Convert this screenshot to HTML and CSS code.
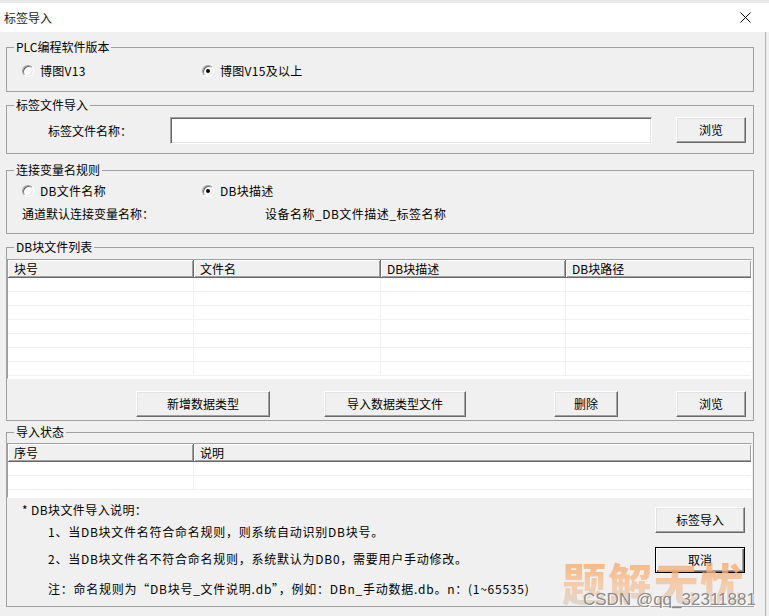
FILE: index.html
```html
<!DOCTYPE html>
<html lang="zh-CN">
<head>
    <meta charset="UTF-8">
    <title>标签导入</title>
    <link rel="stylesheet" href="styles.css">
</head>
<body>
    <div class="window">
        <div class="titlebar">
            <span class="title">标签导入</span>
            <svg class="close" width="11" height="11" viewBox="0 0 11 11">
                <path d="M0.5 0.5 L10.5 10.5 M10.5 0.5 L0.5 10.5" stroke="#000" stroke-width="1" fill="none"/>
            </svg>
        </div>

        <div class="dialog">
            <fieldset class="group version">
                <legend>PLC编程软件版本</legend>
                <div class="radio-row">
                    <label class="radio"><span class="radio-box"></span>博图V13</label>
                    <label class="radio"><span class="radio-box checked"></span>博图V15及以上</label>
                </div>
            </fieldset>

            <fieldset class="group file">
                <legend>标签文件导入</legend>
                <div class="file-row">
                    <span class="field-label">标签文件名称：</span>
                    <input type="text" class="textbox">
                    <button class="btn btn-browse">浏览</button>
                </div>
            </fieldset>

            <fieldset class="group naming">
                <legend>连接变量名规则</legend>
                <div class="radio-row">
                    <label class="radio"><span class="radio-box"></span>DB文件名称</label>
                    <label class="radio"><span class="radio-box checked"></span>DB块描述</label>
                </div>
                <div class="info-row">
                    <span class="info-label">通道默认连接变量名称：</span>
                    <span class="info-value">设备名称_DB文件描述_标签名称</span>
                </div>
            </fieldset>

            <fieldset class="group db-list">
                <legend>DB块文件列表</legend>
                <div class="listview list-db">
                    <table class="grid">
                        <thead>
                            <tr>
                                <th class="col-a">块号</th>
                                <th class="col-b">文件名</th>
                                <th class="col-c">DB块描述</th>
                                <th class="col-d">DB块路径</th>
                            </tr>
                        </thead>
                        <tbody>
                            <tr><td></td><td></td><td></td><td></td></tr>
                            <tr><td></td><td></td><td></td><td></td></tr>
                            <tr><td></td><td></td><td></td><td></td></tr>
                            <tr><td></td><td></td><td></td><td></td></tr>
                            <tr><td></td><td></td><td></td><td></td></tr>
                            <tr><td></td><td></td><td></td><td></td></tr>
                            <tr><td></td><td></td><td></td><td></td></tr>
                        </tbody>
                    </table>
                </div>
                <div class="btn-row">
                    <button class="btn btn-add">新增数据类型</button>
                    <button class="btn btn-import-type">导入数据类型文件</button>
                    <button class="btn btn-delete">删除</button>
                    <button class="btn btn-browse">浏览</button>
                </div>
            </fieldset>

            <fieldset class="group status">
                <legend>导入状态</legend>
                <div class="listview list-status">
                    <table class="grid">
                        <thead>
                            <tr>
                                <th class="col-a">序号</th>
                                <th class="col-wide">说明</th>
                            </tr>
                        </thead>
                        <tbody>
                            <tr><td></td><td></td></tr>
                            <tr><td></td><td></td></tr>
                        </tbody>
                    </table>
                </div>
                <div class="notes-area">
                    <div class="notes">
                        <p class="note-head">* DB块文件导入说明：</p>
                        <p class="note n1">1、当DB块文件名符合命名规则，则系统自动识别DB块号。</p>
                        <p class="note n2">2、当DB块文件名不符合命名规则，系统默认为DB0，需要用户手动修改。</p>
                        <p class="note n3">注：命名规则为“DB块号_文件说明.db”，例如：DBn_手动数据.db。n：(1~65535)</p>
                    </div>
                    <div class="side-buttons">
                        <button class="btn btn-side">标签导入</button>
                        <button class="btn btn-side default">取消</button>
                    </div>
                </div>
            </fieldset>
        </div>

        <div class="watermark">
            <span class="wm-big">题解无忧</span>
            <span class="wm-small">CSDN @qq_32311881</span>
        </div>
    </div>
</body>
</html>
```

FILE: styles.css
```css
:root {
    --face: #f0f0f0;
    --frame: #a0a0a0;
    --shadow: #696969;
    --light: #e3e3e3;
    --grid: #f0f0f0;
}

* {
    box-sizing: border-box;
}

body {
    margin: 0;
    background-color: var(--face);
    font-family: "Noto Sans CJK SC", sans-serif;
    font-size: 12px;
    line-height: 16px;
    color: #000;
}

.window {
    position: relative;
    width: 769px;
    height: 616px;
    background-color: var(--face);
    overflow: hidden;
}

/* title bar */
.titlebar {
    height: 32px;
    border-top: 3px solid #e8e8e8;
    background-color: #fff;
    display: flex;
    align-items: center;
    justify-content: space-between;
    padding: 0 18px 0 4px;
}

.title {
    font-size: 12px;
    color: #1a1a1a;
}

.close {
    display: block;
}

.dialog {
    width: 766px;
    height: 584px;
    padding: 7px 11px 0 6px;
    border-right: 1px solid #b4b4b4;
}

/* group boxes */
.group {
    margin: 0;
    padding: 0;
    min-width: 0;
    border: 1px solid var(--frame);
}

.group legend {
    margin-left: 7px;
    padding: 0 2px;
    line-height: 16px;
}

.version {
    padding: 8px 0 12px;
}

.file {
    margin-top: 5px;
    padding: 4px 0 9px;
}

.naming {
    margin-top: 8px;
    padding: 5px 0 11px;
}

.db-list {
    margin-top: 5px;
    padding: 4px 0 3px;
}

.status {
    margin-top: 3px;
    padding-top: 3px;
}

/* radios */
.radio-row {
    display: flex;
    padding-left: 15px;
    height: 16px;
}

.radio {
    display: flex;
    align-items: center;
    gap: 6px;
    width: 180px;
    letter-spacing: 0.3px;
}

.radio-box {
    position: relative;
    width: 12px;
    height: 12px;
    border-radius: 50%;
    background-color: #fff;
    border: 1px solid;
    border-color: var(--frame) #fff #fff var(--frame);
    box-shadow: inset 1px 1px 0 var(--shadow), inset -1px -1px 0 var(--light);
}

.radio-box.checked::after {
    content: "";
    position: absolute;
    left: 3px;
    top: 3px;
    width: 4px;
    height: 4px;
    border-radius: 50%;
    background-color: #000;
}

/* file row */
.file-row {
    display: flex;
    align-items: center;
    height: 27px;
    padding-left: 41px;
}

.field-label {
    width: 122px;
}

.textbox {
    width: 482px;
    height: 27px;
    margin: 0;
    padding: 0 4px;
    background-color: #fff;
    border: 1px solid;
    border-color: var(--frame) #fff #fff var(--frame);
    box-shadow: inset 1px 1px 0 var(--shadow), inset -1px -1px 0 var(--light);
    font: inherit;
}

.file-row .btn-browse {
    margin-left: 24px;
    height: 26px;
    align-self: flex-start;
}

.info-row {
    display: flex;
    margin-top: 7px;
    padding-left: 15px;
}

.info-label {
    width: 243px;
}

.info-value {
    letter-spacing: 0.5px;
}

/* buttons */
.btn {
    height: 26px;
    margin: 0;
    padding: 0;
    font: inherit;
    color: #000;
    background-color: var(--face);
    border: 1px solid;
    border-color: #fff var(--shadow) var(--shadow) #fff;
    box-shadow: inset -1px -1px 0 var(--frame), inset 1px 1px 0 var(--light);
    cursor: pointer;
}

.btn.default {
    border-color: #000;
    box-shadow: inset 1px 1px 0 #fff, inset -1px -1px 0 var(--shadow), inset -2px -2px 0 var(--frame);
}

.btn-browse {
    width: 70px;
}

.btn-row {
    display: flex;
    margin-top: 12px;
    padding-left: 129px;
}

.btn-add {
    width: 134px;
}

.btn-import-type {
    width: 142px;
    margin-left: 54px;
}

.btn-delete {
    width: 64px;
    margin-left: 88px;
}

.btn-row .btn-browse {
    margin-left: 58px;
}

/* list views */
.listview {
    margin-right: 1px;
    background-color: #fff;
    border: 1px solid;
    border-color: var(--frame) #fff #fff var(--frame);
    overflow: hidden;
}

.list-db {
    height: 120px;
}

.list-status {
    height: 55px;
}

.grid {
    border-collapse: separate;
    border-spacing: 0;
    table-layout: fixed;
    width: 744px;
}

.grid th {
    height: 18px;
    padding: 0 0 0 6px;
    font-weight: normal;
    text-align: left;
    background-color: var(--face);
    border-right: 1px solid var(--shadow);
    border-bottom: 1px solid var(--shadow);
    box-shadow: inset 1px 1px 0 #fff, inset -1px -1px 0 var(--frame);
}

.grid td {
    height: 14px;
    padding: 0;
    border-right: 1px solid var(--grid);
    border-bottom: 1px solid var(--grid);
}

.col-a { width: 186px; }
.col-b { width: 187px; }
.col-c { width: 185px; }
.col-d { width: 186px; }
.col-wide { width: 558px; }

/* notes */
.notes-area {
    display: flex;
    justify-content: space-between;
    height: 108px;
}

.notes p {
    margin: 0;
    height: 16px;
    white-space: nowrap;
}

.note-head {
    margin-top: 4px !important;
    padding-left: 15px;
    letter-spacing: 0.4px;
}

.note {
    padding-left: 41px;
    letter-spacing: 0.75px;
}

.n1 { margin-top: 6px !important; }
.n2 { margin-top: 11px !important; }
.n3 { margin-top: 14px !important; }

.side-buttons {
    display: flex;
    flex-direction: column;
    gap: 14px;
    padding-top: 9px;
    margin-right: 8px;
}

.btn-side {
    width: 90px;
}

/* screenshot watermark */
.watermark {
    position: absolute;
    left: 562px;
    top: 558px;
    width: 196px;
    height: 54px;
    pointer-events: none;
}

.wm-big {
    display: block;
    font-family: "Noto Sans CJK SC", sans-serif;
    font-size: 44px;
    font-weight: 900;
    line-height: 48px;
    letter-spacing: 2px;
    white-space: nowrap;
    background: linear-gradient(180deg, #f3a661 0%, #f6c49a 55%, #d9d2cc 100%);
    -webkit-background-clip: text;
    background-clip: text;
    color: transparent;
    opacity: 0.8;
}

.wm-small {
    position: absolute;
    left: 21px;
    top: 33px;
    font-family: "Liberation Sans", sans-serif;
    font-size: 17px;
    line-height: 18px;
    white-space: nowrap;
    color: #8a8a8a;
    text-shadow: 1px 1px 0 #fff;
}
```
